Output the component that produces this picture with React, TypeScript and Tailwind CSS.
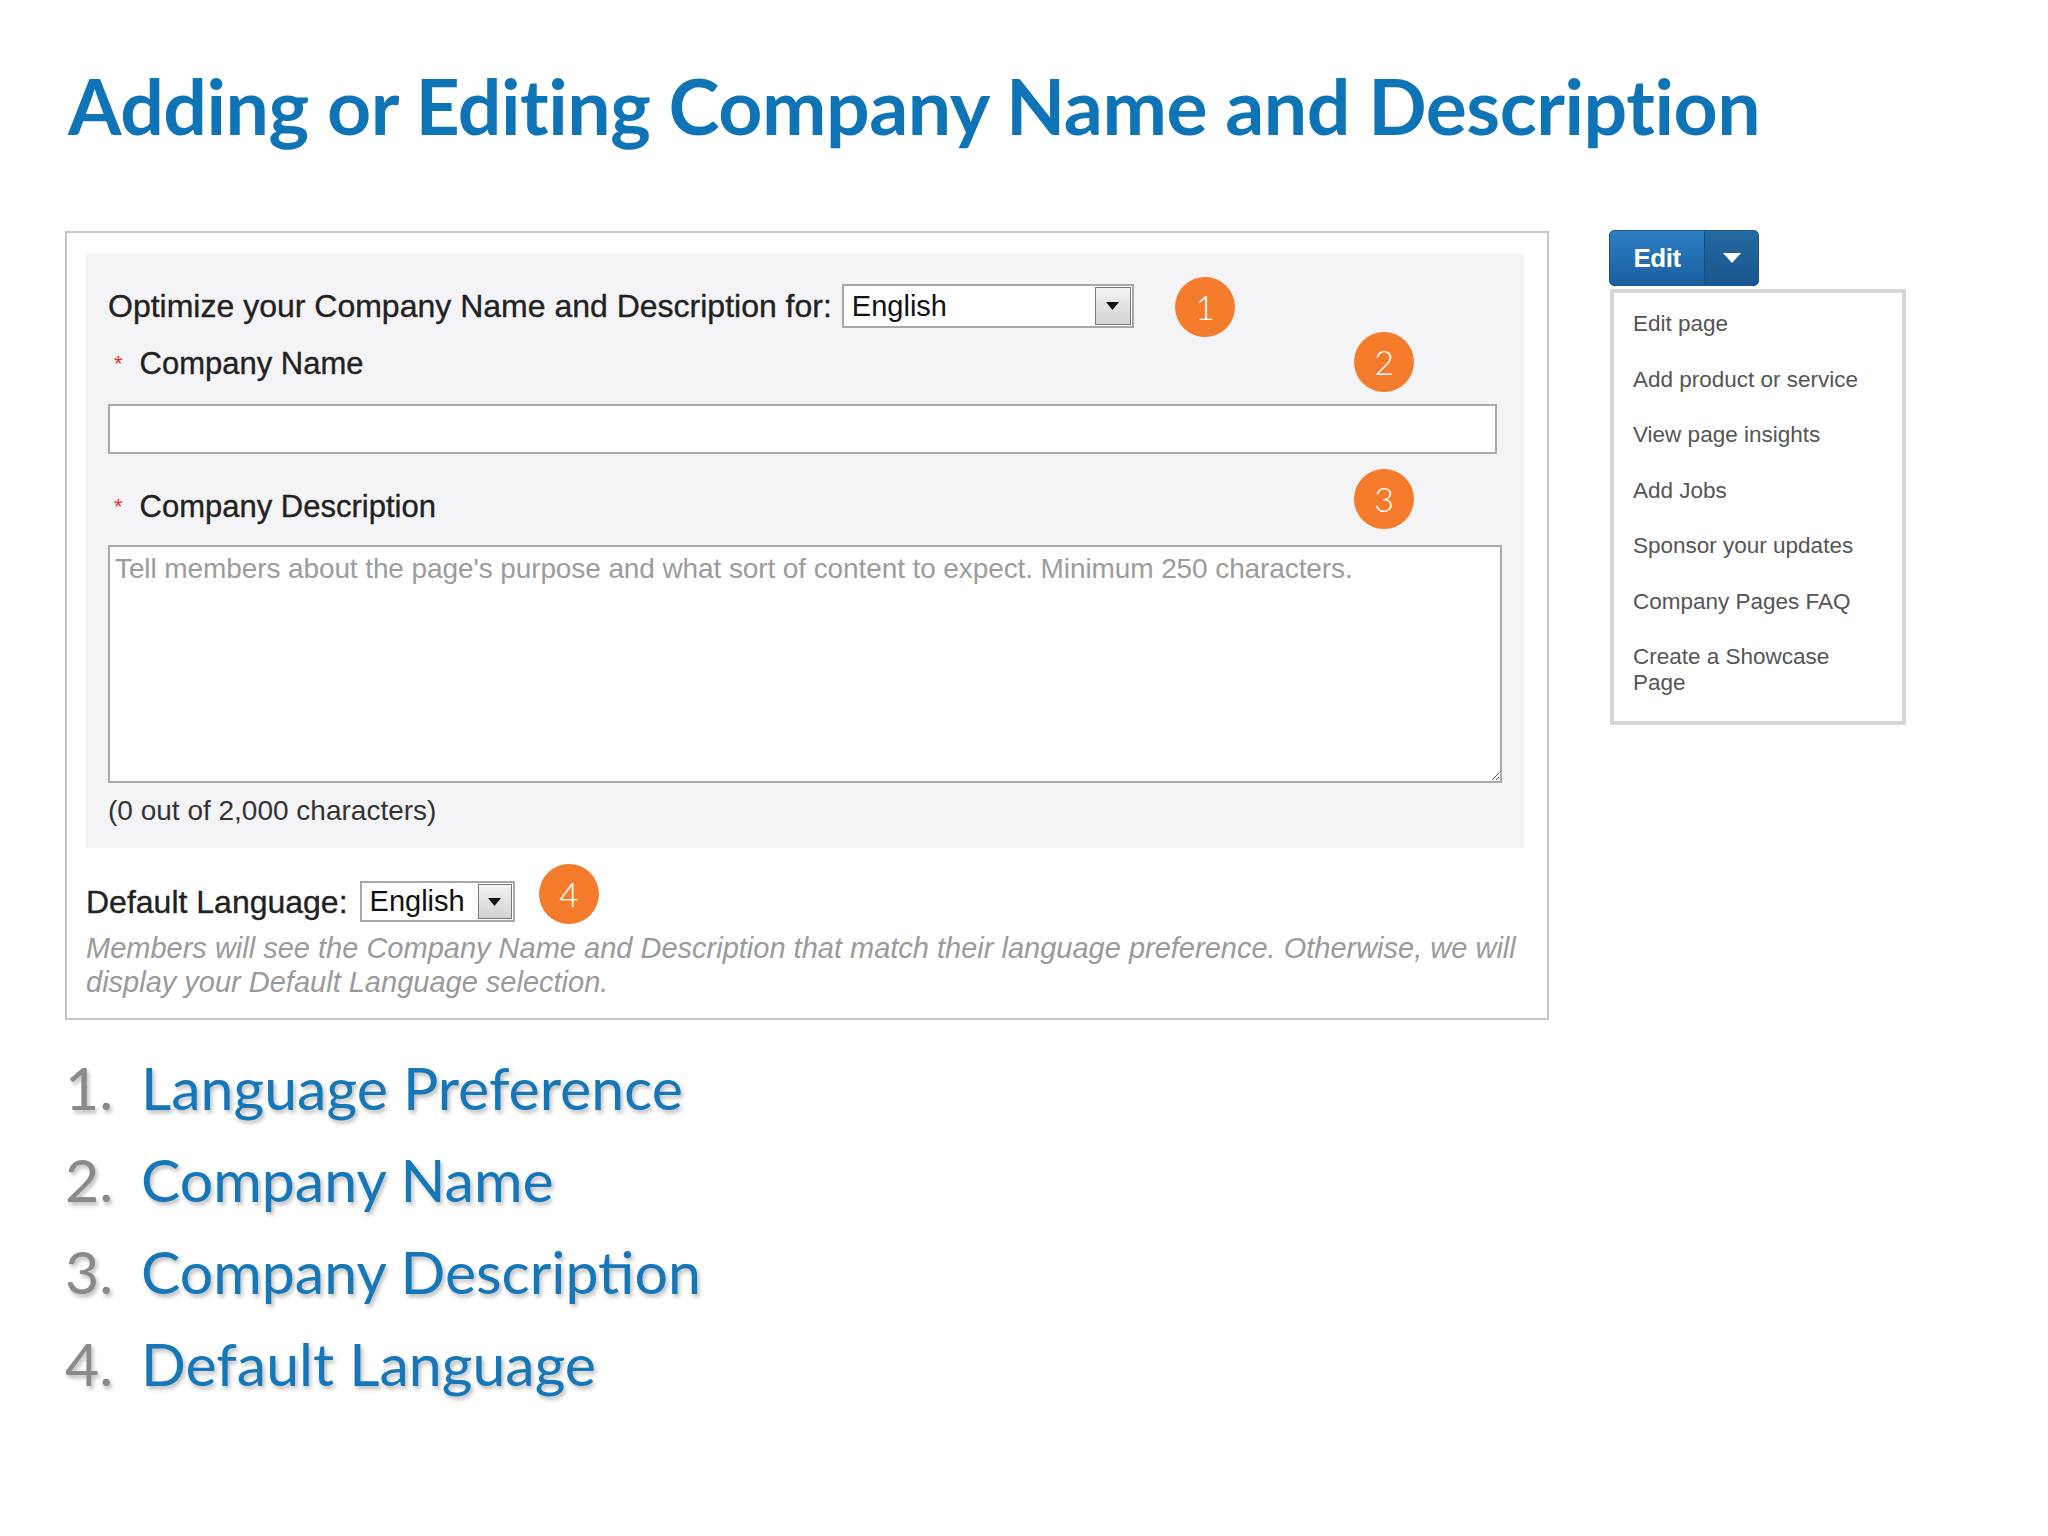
import React from "react";

function Badge({ n, className }: { n: string; className: string }) {
  return (
    <div
      className={`absolute w-[60px] h-[60px] rounded-full bg-[#f47a2c] flex items-center justify-center text-white text-[34px] font-light leading-none ${className}`}
      style={{ fontFamily: "Lato, 'Open Sans', sans-serif" }}
    >
      {n}
    </div>
  );
}

function FakeSelect({ w, h, arrowW }: { w: string; h: string; arrowW: string }) {
  return (
    <div className={`flex items-stretch bg-white border-2 border-[#a8a8a8] ${w} ${h}`}>
      <div className="flex-1 flex items-center pl-[8px] text-[29px] text-[#111] leading-none">English</div>
      <div
        className={`${arrowW} m-[1px] border border-[#7a7a7a] bg-gradient-to-b from-[#f4f4f4] to-[#d2d2d2] flex items-center justify-center`}
      >
        <svg width="13" height="8" viewBox="0 0 13 8">
          <path d="M0 0 H13 L6.5 8 Z" fill="#111" />
        </svg>
      </div>
    </div>
  );
}

export default function App() {
  const sans = { fontFamily: "'Liberation Sans', Arial, sans-serif" };
  const geo = { fontFamily: "Lato, 'Open Sans', sans-serif" };
  const menu = [
    "Edit page",
    "Add product or service",
    "View page insights",
    "Add Jobs",
    "Sponsor your updates",
    "Company Pages FAQ",
    "Create a Showcase Page",
  ];
  const list = ["Language Preference", "Company Name", "Company Description", "Default Language"];
  return (
    <div className="w-[2048px] h-[1536px] bg-white overflow-hidden pl-[65px]">
      <h1
        className="pt-[67px] pl-[3px] text-[77px] leading-none font-bold text-[#0f74b6] tracking-[-0.5px] whitespace-nowrap"
        style={geo}
      >
        Adding or Editing Company Name and Description
      </h1>

      <div className="flex items-start mt-[87px] gap-[60px]">
        {/* left column */}
        <div className="w-[1484px]">
          <div className="relative border-2 border-[#c6c6c6] pt-[21px] pl-[19px] pr-[23px] pb-[19px]" style={sans}>
            <div className="bg-[#f4f4f6] pt-[30px] pl-[22px] pr-[22px] pb-[21px]">
              <div className="flex items-center h-[44px] gap-[10px]">
                <span className="text-[32px] text-[#222] leading-none [-webkit-text-stroke:0.35px_#222]">
                  Optimize your Company Name and Description for:
                </span>
                <FakeSelect w="w-[292px]" h="h-[44px]" arrowW="w-[36px]" />
              </div>
              <div className="mt-[18px] leading-[36px] text-[31px] text-[#222] flex items-center [-webkit-text-stroke:0.35px_#222]">
                <span className="text-[#e23030] text-[22px] mr-[17px] ml-[6px] [-webkit-text-stroke:0px]">*</span>
                Company Name
              </div>
              <input
                type="text"
                className="block mt-[22px] w-[1389px] h-[50px] bg-white border-2 border-[#aaaaaa] outline-none"
              />
              <div className="mt-[35px] leading-[36px] text-[31px] text-[#222] flex items-center [-webkit-text-stroke:0.35px_#222]">
                <span className="text-[#e23030] text-[22px] mr-[17px] ml-[6px] [-webkit-text-stroke:0px]">*</span>
                Company Description
              </div>
              <textarea
                className="block mt-[20px] w-[1394px] h-[238px] bg-white border-2 border-[#aaaaaa] outline-none px-[5px] pt-[6px] text-[28px] leading-[32px] tracking-[-0.1px] placeholder:text-[#9c9c9c] resize-y"
                style={sans}
                placeholder="Tell members about the page's purpose and what sort of content to expect. Minimum 250 characters."
              />
              <div className="mt-[12px] text-[28px] leading-[32px] text-[#333]">(0 out of 2,000 characters)</div>
            </div>

            <div className="flex items-center h-[41px] mt-[33px] gap-[12px]">
              <span className="text-[32px] text-[#222] leading-none [-webkit-text-stroke:0.35px_#222]">
                Default Language:
              </span>
              <FakeSelect w="w-[155px]" h="h-[41px]" arrowW="w-[34px]" />
            </div>
            <p className="mt-[9px] text-[29px] leading-[34px] italic text-[#9a9a9a]">
              Members will see the Company Name and Description that match their language preference. Otherwise, we
              will display your Default Language selection.
            </p>

            <Badge n="1" className="left-[1108px] top-[44px]" />
            <Badge n="2" className="left-[1287px] top-[99px]" />
            <Badge n="3" className="left-[1287px] top-[236px]" />
            <Badge n="4" className="left-[472px] top-[631px]" />
          </div>

          <ol className="mt-[22px]" style={geo}>
            {list.map((t, i) => (
              <li
                key={t}
                className="flex text-[59px] leading-[92px] [text-shadow:2px_3px_4px_rgba(0,0,0,0.28)]"
              >
                <span className="w-[76px] text-[#8a8a8a]">{i + 1}.</span>
                <span className="text-[#1576b8]">{t}</span>
              </li>
            ))}
          </ol>
        </div>

        {/* right column */}
        <div className="w-[297px] -mt-[1px]" style={sans}>
          <div className="flex w-[150px] h-[56px] rounded-[5px] border border-[#1b5790] bg-gradient-to-b from-[#2c7ec2] to-[#1c5f9f] overflow-hidden">
            <div className="w-[94px] flex items-center justify-center text-white font-bold text-[26px] tracking-[-0.5px]">
              Edit
            </div>
            <div className="flex-1 border-l border-[#174c80] bg-gradient-to-b from-[#24699f] to-[#1a5690] flex items-center justify-center">
              <svg width="18" height="10" viewBox="0 0 18 10">
                <path d="M0 0 H18 L9 10 Z" fill="#fff" />
              </svg>
            </div>
          </div>
          <div className="mt-[3px] ml-[1px] w-[296px] border-4 border-[#d5d5d9] bg-white pt-[18px] pb-[25px] pl-[19px] pr-[20px] flex flex-col gap-[29.5px]">
            {menu.map((m) => (
              <div key={m} className="text-[22.5px] leading-[26px] text-[#555]">
                {m}
              </div>
            ))}
          </div>
        </div>
      </div>
    </div>
  );
}
